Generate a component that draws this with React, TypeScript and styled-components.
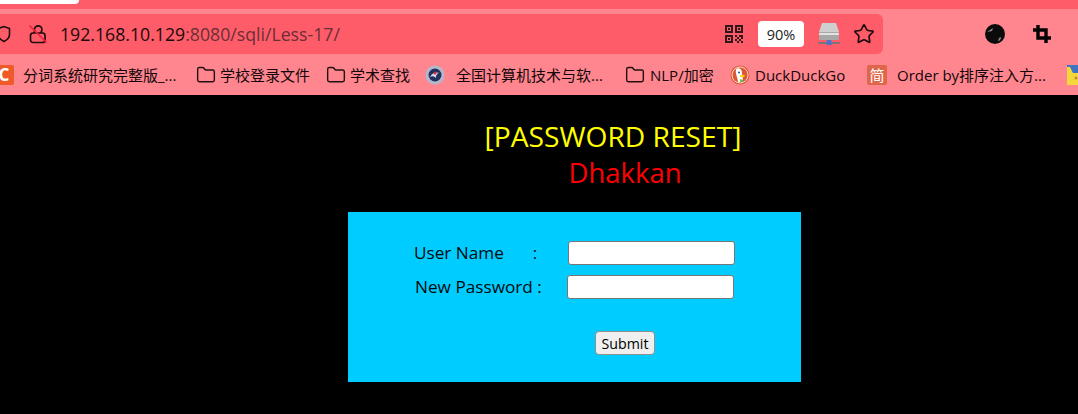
import styled, { createGlobalStyle } from "styled-components"
import { Folder, Star } from "lucide-react"

const UI_FONT = `"Open Sans", "Noto Sans CJK SC", sans-serif`

const GlobalStyle = createGlobalStyle`
  html, body {
    margin: 0;
    padding: 0;
    height: 100%;
    background: #000;
    overflow: hidden;
    font-family: ${UI_FONT};
  }
`

const Page = styled.div`
  width: 1078px;
  height: 414px;
  display: flex;
  flex-direction: column;
  overflow: hidden;
`

const Chrome = styled.div`
  height: 95px;
  background: #ff868f;
  display: flex;
  flex-direction: column;
`

const TabStrip = styled.div`
  height: 9px;
  background: #ff5c69;
`

const ActiveTab = styled.div`
  width: 79px;
  height: 4px;
  background: #fff;
  border-bottom-right-radius: 5px;
`

const Toolbar = styled.div`
  margin-top: 5px;
  height: 40px;
  display: flex;
  align-items: center;
`

const AddressBar = styled.div`
  width: 883px;
  height: 40px;
  background: #ff5c69;
  border-radius: 0 6px 6px 0;
  display: flex;
  align-items: center;
  flex-shrink: 0;
`

const SecurityIcons = styled.div`
  width: 63px;
  height: 20px;
  display: flex;
  align-items: center;
  gap: 18px;
  margin-left: -3px;
  flex-shrink: 0;
`

const Url = styled.div`
  flex: 1;
  font-size: 17.7px;
  color: #6a2f35;
  white-space: nowrap;
  b {
    font-weight: 400;
    color: #1a0a0b;
  }
`

const BarTools = styled.div`
  display: flex;
  align-items: center;
  margin-right: 8px;
`

const ZoomBadge = styled.div`
  width: 46px;
  height: 26px;
  margin: 0 14px 0 15px;
  background: #fff;
  border-radius: 4px;
  color: #222;
  font-size: 14.5px;
  display: flex;
  align-items: center;
  justify-content: center;
`

const Extensions = styled.div`
  display: flex;
  align-items: center;
  gap: 28px;
  margin-left: 102px;
`

const Bookmarks = styled.div`
  height: 41px;
  display: flex;
  align-items: center;
  white-space: nowrap;
  overflow: hidden;
`

const Bookmark = styled.div<{ $width: number; $gap?: number }>`
  width: ${(p) => p.$width}px;
  flex-shrink: 0;
  display: flex;
  align-items: center;
  gap: ${(p) => p.$gap ?? 4}px;
  font-size: 15px;
  color: #150709;
`

const Favicon = styled.div<{ $bg: string; $gap?: number }>`
  width: 20px;
  height: 20px;
  flex-shrink: 0;
  background: ${(p) => p.$bg};
  border-radius: 2px;
  margin-right: ${(p) => p.$gap ?? 5}px;
  color: #fff;
  font-size: 15px;
  line-height: 20px;
  text-align: center;
`

const CroppedFavicon = styled(Favicon)`
  margin-left: -6px;
  border-radius: 0 2px 2px 0;
  font-weight: 700;
  font-size: 17px;
`

const Content = styled.main`
  flex: 1;
  background: #000;
  display: flex;
  flex-direction: column;
  align-items: center;
`

const Heading = styled.div<{ $color: string; $shift: number; $size: number }>`
  color: ${(p) => p.$color};
  font-size: ${(p) => p.$size}px;
  line-height: 36px;
  transform: translateX(${(p) => p.$shift}px);
`

const Titles = styled.div`
  margin-top: 23px;
  display: flex;
  flex-direction: column;
  align-items: center;
  gap: 1px;
`

const FormPanel = styled.form`
  width: 453px;
  height: 170px;
  margin-top: 21px;
  margin-left: 71px;
  background: #00ccff;
  box-sizing: border-box;
  padding-top: 29px;
  display: flex;
  flex-direction: column;
`

const Row = styled.div<{ $left: number }>`
  height: 24px;
  margin-bottom: 10px;
  display: flex;
  align-items: center;
  padding-left: ${(p) => p.$left}px;
`

const Label = styled.label<{ $width: number }>`
  width: ${(p) => p.$width}px;
  font-size: 17.2px;
  line-height: 22px;
  color: #00080c;
  white-space: pre;
`

const Colon = styled.span`
  margin-left: 2px;
`

const TextInput = styled.input`
  width: 167px;
  height: 24px;
  box-sizing: border-box;
  border: 1px solid #767676;
  border-radius: 3px;
  background: #fff;
  padding: 0;
`

const SubmitButton = styled.button`
  align-self: flex-start;
  margin: 22px 0 0 247px;
  width: 60px;
  height: 24px;
  padding: 0;
  box-sizing: border-box;
  border: 1px solid #8f8f8f;
  border-radius: 4px;
  background: #efefef;
  font-family: ${UI_FONT};
  font-size: 14.2px;
  color: #000;
`

const ShieldIcon = () => (
  <svg width="14" height="18" viewBox="0 0 14 18" fill="none" stroke="#1f0c0e" strokeWidth="1.6">
    <path d="M1 3.5 7 1.5l5.5 2v6c0 3-2.5 5.5-5.5 7-3-1.5-6-4-6-7z" />
  </svg>
)

const InsecureLockIcon = () => (
  <svg width="18" height="20" viewBox="0 0 18 20" fill="none">
    <path d="M5.5 9V5.5a3.7 3.7 0 0 1 7.4 0c0 2-.5 2.5-1.4 3.5" stroke="#1f0c0e" strokeWidth="1.7" />
    <rect x="1.5" y="9" width="14.5" height="9.5" rx="2.5" stroke="#1f0c0e" strokeWidth="1.7" />
    <path d="M0.5 1.5 17.5 18.5" stroke="#f0243c" strokeWidth="1.6" />
  </svg>
)

const QrIcon = () => (
  <svg width="18" height="18" viewBox="0 0 18 18" fill="#33181b">
    <path fillRule="evenodd" d="M0 0h8v8H0zM2 2v4h4V2zM10 0h8v8h-8zM12 2v4h4V2zM0 10h8v8H0zM2 12v4h4v-4z" />
    <rect x="3" y="3" width="2" height="2" />
    <rect x="13" y="3" width="2" height="2" />
    <rect x="3" y="13" width="2" height="2" />
    <path d="M10 10h2v2h-2zM14 10h4v2h-4zM12 12h2v2h-2zM16 12h2v2h-2zM10 14h2v2h-2zM14 14h2v2h-2zM12 16h2v2h-2zM16 16h2v2h-2z" />
  </svg>
)

const DriveIcon = () => (
  <svg width="22" height="24" viewBox="0 0 22 24">
    <path d="M4 1h14l3 9H1z" fill="#cfcfcf" />
    <rect x="1" y="10" width="20" height="8" rx="1" fill="#a9a7a7" />
    <path d="M1 11h20v2H1z" fill="#e2e2e2" />
    <rect x="0" y="20" width="22" height="2" fill="#7f7577" />
    <rect x="8.5" y="18" width="5" height="5" rx="1" fill="#4d72c9" />
  </svg>
)

const AvatarIcon = () => (
  <svg width="20" height="20" viewBox="0 0 20 20">
    <circle cx="10" cy="10" r="10" fill="#0b0b0b" />
    <path d="M2 8l6-4-1 3zM13 17c2 0 3-2 3-4l-2 1z" fill="#8a8a8a" />
  </svg>
)

const CropIcon = () => (
  <svg width="18" height="18" viewBox="0 0 18 18" fill="none" stroke="#000" strokeWidth="3.4">
    <path d="M5 0v13h13M0 5h13v13" />
  </svg>
)

const NetworkFavicon = () => (
  <svg width="20" height="20" viewBox="0 0 20 20">
    <circle cx="10" cy="10" r="9.5" fill="#b4b8cc" />
    <circle cx="10" cy="10" r="6.5" fill="#23305e" />
    <path d="M5 12c3-5 6-5 10-4-3 0-4 2-4 5-2-2-4-2-6-1z" fill="#d8dbe8" />
    <circle cx="10" cy="8" r="1.5" fill="#c9303c" />
  </svg>
)

const DuckFavicon = () => (
  <svg width="20" height="20" viewBox="0 0 20 20">
    <circle cx="10" cy="10" r="9.5" fill="#de5833" />
    <circle cx="10" cy="10" r="8" fill="none" stroke="#f7d9ce" strokeWidth="1" />
    <path d="M6 4c3-2 6 0 6 4 0 2 1 4 1 9H8C8 13 5 9 6 4z" fill="#fff" />
    <circle cx="9" cy="7.5" r="1" fill="#2d4f8e" />
    <path d="M10 10h5l-1 2h-4z" fill="#fdd20a" />
    <path d="M10 14l3 1v2h-3z" fill="#65bc46" />
  </svg>
)

const PikachuFavicon = () => (
  <svg width="20" height="20" viewBox="0 0 20 20">
    <rect width="20" height="20" fill="#3f74c2" />
    <path d="M0 2h3l3 6 8 0 6 12H0z" fill="#f5d63d" />
    <circle cx="9" cy="13" r="1.5" fill="#c98a2e" />
  </svg>
)

const BookmarkFolder = () => <Folder size={20} strokeWidth={1.7} color="#26100f" />

export default function App() {
  return (
    <Page>
      <GlobalStyle />
      <Chrome>
        <TabStrip>
          <ActiveTab />
        </TabStrip>
        <Toolbar>
          <AddressBar>
            <SecurityIcons>
              <ShieldIcon />
              <InsecureLockIcon />
            </SecurityIcons>
            <Url>
              <b>192.168.10.129</b>:8080/sqli/Less-17/
            </Url>
            <BarTools>
              <QrIcon />
              <ZoomBadge>90%</ZoomBadge>
              <DriveIcon />
              <Star size={22} strokeWidth={1.8} color="#1c0a0c" style={{ marginLeft: 13 }} />
            </BarTools>
          </AddressBar>
          <Extensions>
            <AvatarIcon />
            <CropIcon />
          </Extensions>
        </Toolbar>
        <Bookmarks>
          <Bookmark $width={196} $gap={0}>
            <CroppedFavicon $bg="#f05a28" $gap={9}>C</CroppedFavicon>
            分词系统研究完整版_...
          </Bookmark>
          <Bookmark $width={130}>
            <BookmarkFolder />
            学校登录文件
          </Bookmark>
          <Bookmark $width={99}>
            <BookmarkFolder />
            学术查找
          </Bookmark>
          <Bookmark $width={200} $gap={11}>
            <NetworkFavicon />
            全国计算机技术与软...
          </Bookmark>
          <Bookmark $width={105} $gap={5}>
            <BookmarkFolder />
            NLP/加密
          </Bookmark>
          <Bookmark $width={137} $gap={5}>
            <DuckFavicon />
            DuckDuckGo
          </Bookmark>
          <Bookmark $width={200} $gap={5}>
            <Favicon $bg="#e0664a">简</Favicon>
            Order by排序注入方...
          </Bookmark>
          <Bookmark $width={20}>
            <PikachuFavicon />
          </Bookmark>
        </Bookmarks>
      </Chrome>
      <Content>
        <Titles>
          <Heading $color="#ffff00" $shift={74} $size={28.2}>[PASSWORD RESET]</Heading>
          <Heading $color="#ff0000" $shift={86} $size={27.5}>Dhakkan</Heading>
        </Titles>
        <FormPanel onSubmit={(e) => e.preventDefault()}>
          <Row $left={66}>
            <Label $width={154} htmlFor="uname">User Name      <Colon>:</Colon></Label>
            <TextInput id="uname" type="text" />
          </Row>
          <Row $left={67}>
            <Label $width={152} htmlFor="passwd">New Password :</Label>
            <TextInput id="passwd" type="text" />
          </Row>
          <SubmitButton type="submit">Submit</SubmitButton>
        </FormPanel>
      </Content>
    </Page>
  )
}
